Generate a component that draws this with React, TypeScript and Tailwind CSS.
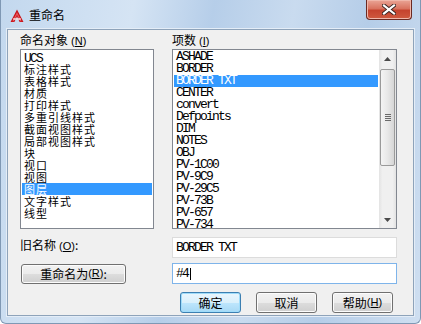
import React from 'react'

const cjk = "font-['Noto_Sans_CJK_SC',sans-serif]"
const mono = "font-['Liberation_Mono',monospace] text-[13px] tracking-[-1.8px]"

const leftItems = [
  'UCS',
  '标注样式',
  '表格样式',
  '材质',
  '打印样式',
  '多重引线样式',
  '截面视图样式',
  '局部视图样式',
  '块',
  '视口',
  '视图',
  '图层',
  '文字样式',
  '线型',
]

const rightItems = [
  'ASHADE',
  'BORDER',
  'BORDER TXT',
  'CENTER',
  'convert',
  'Defpoints',
  'DIM',
  'NOTES',
  'OBJ',
  'PV-1C00',
  'PV-9C9',
  'PV-29C5',
  'PV-73B',
  'PV-657',
  'PV-734',
]

const Key = ({ k }: { k: string }) => (
  <span className="font-['Liberation_Sans',sans-serif] text-[11px]">
    {' '}(<span className="underline">{k}</span>)
  </span>
)

const WinButton = ({
  children,
  primary,
  className,
}: {
  children: React.ReactNode
  primary?: boolean
  className?: string
}) => {
  const skin = primary
    ? 'border-[#3c7fb1] bg-[linear-gradient(#eaf6fd_0%,#d9f0fc_50%,#bee6fd_50%,#a7d9f5_100%)] shadow-[inset_0_0_0_1px_#9fdcfa]'
    : 'border-[#707070] bg-[linear-gradient(#f2f2f2_0%,#ebebeb_50%,#dddddd_50%,#cfcfcf_100%)] shadow-[inset_0_0_0_1px_#fcfcfc]'
  return (
    <div
      className={`flex items-center justify-center rounded-[3px] border text-[12px] leading-none text-black ${skin} ${className ?? ''}`}
    >
      {children}
    </div>
  )
}

const AcadIcon = () => (
  <svg width="14" height="14" viewBox="0 0 14 14">
    <path d="M7 0.5 L13.5 13 H9.6 L7 7.6 L4.4 13 H0.5 Z" fill="#c8151b" />
    <path d="M7 3.2 L11.6 12.2 H10.2 L7 5.8 L3.8 12.2 H2.4 Z" fill="#e8555a" />
    <rect x="3.2" y="9.2" width="7.6" height="1.6" fill="#f6d7d8" />
  </svg>
)

const CloseButton = () => (
  <div className="mr-[8px] flex h-[20px] w-[46px] items-center justify-center rounded-b-[4px] border border-t-0 border-[#6b2a22] bg-[linear-gradient(#eaa596_0%,#d9735f_45%,#c5432e_55%,#cf5a3f_100%)] shadow-[inset_0_0_0_1px_#f0b7aa]">
    <svg width="14" height="11" viewBox="0 0 14 11">
      <path d="M2 1.5 L12 9.5 M12 1.5 L2 9.5" stroke="#3a2420" strokeWidth="4" strokeLinecap="square" />
      <path d="M2 1.5 L12 9.5 M12 1.5 L2 9.5" stroke="#ffffff" strokeWidth="2.2" strokeLinecap="square" />
    </svg>
  </div>
)

const Arrow = ({ up }: { up?: boolean }) => (
  <div className="flex h-[17px] items-center justify-center">
    <svg width="7" height="4" viewBox="0 0 7 4">
      <path d={up ? 'M0 4 L3.5 0 L7 4 Z' : 'M0 0 L3.5 4 L7 0 Z'} fill="#4a4a4a" />
    </svg>
  </div>
)

const ScrollBar = () => (
  <div className="flex w-[17px] flex-col bg-[linear-gradient(90deg,#e3e3e3,#f0f0f0_20%,#f0f0f0_80%,#e3e3e3)]">
    <Arrow up />
    <div className="flex-1 px-[1px] pt-[2px]">
      <div className="flex h-[97px] flex-col items-center justify-center gap-[1px] rounded-[2px] border border-[#9a9a9a] bg-[linear-gradient(90deg,#f4f4f4,#e8e8e8_50%,#d6d6d6)]">
        <div className="h-[1px] w-[6px] bg-[#6a6a6a]" />
        <div className="h-[1px] w-[6px] bg-[#6a6a6a]" />
        <div className="h-[1px] w-[6px] bg-[#6a6a6a]" />
        <div className="h-[1px] w-[6px] bg-[#6a6a6a]" />
      </div>
    </div>
    <Arrow />
  </div>
)

const App = () => {
  return (
    <div className="flex h-[324px] w-[421px] flex-col overflow-hidden rounded-b-[6px] border-x border-b border-[#7f98b4] bg-[linear-gradient(100deg,#c3d8ee_0%,#d5e4f4_28%,#b6cee9_45%,#c9dbef_62%,#b5cde8_78%,#cfdff1_100%)] text-black">
      <div className="flex h-[29px] items-start">
        <div className="ml-[9px] mt-[9px]">
          <AcadIcon />
        </div>
        <div className={`${cjk} ml-[5px] mt-[7px] text-[12px] leading-[16px]`}>重命名</div>
        <div className="ml-auto">
          <CloseButton />
        </div>
      </div>

      <div className="flex flex-1 px-[6px]">
        <div className="flex flex-1 flex-col border border-[#8ea3ba] bg-[#f0f0f0] pl-[12px] pt-[1px] shadow-[0_0_0_1px_#e4edf7]">
          <div className={`${cjk} grid grid-cols-[134px_225px] gap-x-[18px] text-[12px]`}>
            <div className="h-[18px] leading-[18px]">
              命名对象<Key k="N" />
            </div>
            <div className="h-[18px] leading-[18px]">
              项数<Key k="I" />
            </div>

            <div className="h-[180px] overflow-hidden border border-[#828790] bg-white p-[1px]">
              {leftItems.map((item) => (
                <div
                  key={item}
                  className={`h-[12px] pl-[2px] text-[11px] leading-[12px] tracking-[1px] ${item === '图层' ? 'bg-[#3399ff] text-white' : ''}`}
                >
                  {item === 'UCS' ? <span className={mono}>UCS</span> : item}
                </div>
              ))}
            </div>

            <div className="flex h-[180px] border border-[#828790] bg-white">
              <div className="flex-1 overflow-hidden p-[1px]">
                {rightItems.map((item) => (
                  <div
                    key={item}
                    className={`${mono} h-[12px] whitespace-pre pl-[2px] leading-[12px] ${item === 'BORDER TXT' ? 'bg-[#3399ff] text-white' : ''}`}
                  >
                    {item}
                  </div>
                ))}
              </div>
              <ScrollBar />
            </div>

            <div className="mt-[8px] h-[21px] leading-[16px]">
              旧名称<Key k="O" />:
            </div>
            <div className="mt-[8px] flex h-[21px] items-center border border-[#dcdcdc] bg-white pl-[3px]">
              <span className={mono}>BORDER TXT</span>
            </div>

            <div className="mt-[5px] flex h-[21px] items-center pl-[1px]">
              <WinButton className="h-[20px] w-[105px]">
                重命名为<Key k="R" />:
              </WinButton>
            </div>
            <div className="mt-[5px] flex h-[21px] items-center border border-[#7eb4ea] bg-white pl-[3px]">
              <span className={mono}>#4</span>
              <div className="ml-[2px] h-[12px] w-[1px] bg-black" />
            </div>

            <div />
            <div className="mt-[8px] flex gap-[15px] pl-[8px]">
              <WinButton primary className="h-[21px] w-[61px]">
                确定
              </WinButton>
              <WinButton className="h-[21px] w-[61px]">取消</WinButton>
              <WinButton className="h-[21px] w-[61px]">
                帮助<Key k="H" />
              </WinButton>
            </div>
          </div>
        </div>
      </div>
      <div className="h-[7px]" />
    </div>
  )
}

export default App
